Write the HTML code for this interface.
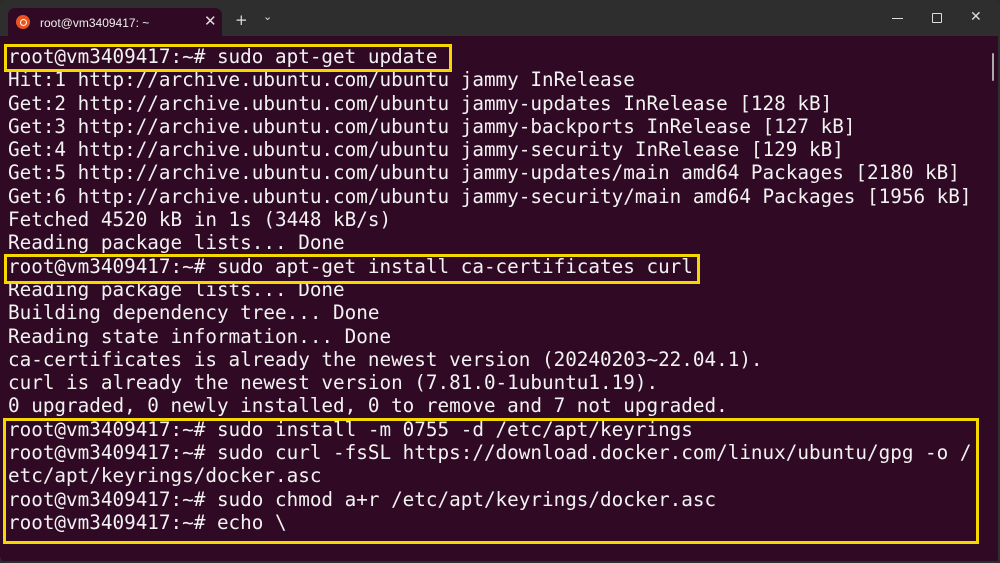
<!DOCTYPE html>
<html><head><meta charset="utf-8"><style>
*{margin:0;padding:0;box-sizing:border-box}
html,body{width:1000px;height:563px;overflow:hidden;background:#2b2b2b}
.win{position:absolute;left:0;top:0;width:1000px;height:563px;background:#2e2e2e;border-radius:8px;overflow:hidden}
.term{position:absolute;left:0;top:36px;width:998px;height:525px;background:#300a24}
.tab{position:absolute;left:8px;top:8px;width:214px;height:30px;background:#300a24;border-radius:7px 7px 0 0}
.tab .t{position:absolute;left:32px;top:8px;font:12px "Liberation Sans",sans-serif;color:#eee}
.logo{position:absolute;left:8px;top:7px;width:14px;height:14px;border-radius:50%;background:#e95420}
.logo:after{content:"";position:absolute;left:3.5px;top:3.5px;width:5px;height:5px;border:1.2px solid #fff;border-radius:50%}
.x{position:absolute;left:196px;top:4px;color:#ddd;font:15px "DejaVu Sans",sans-serif}
.tb{position:absolute;color:#ddd;font:15px "DejaVu Sans",sans-serif}
pre{position:absolute;left:8px;top:45px;font:19.3px/23.3px "DejaVu Sans Mono",monospace;color:#f2f2f2;white-space:pre}
.box{position:absolute;border:3px solid #f7d700}
.sb{position:absolute;left:992px;top:53px;width:2px;height:28px;background:#aaa;border-radius:1px}
</style></head><body>
<div class="win">
<div class="tab"><div class="logo"></div><div class="t">root@vm3409417: ~</div><div class="x">✕</div></div>
<div class="tb" style="left:235px;top:11px">+</div>
<div class="tb" style="left:263px;top:10px;font-size:11px">⌄</div>
<div style="position:absolute;left:892px;top:18px;width:11px;height:1px;background:#ddd"></div>
<div style="position:absolute;left:932px;top:13px;width:10px;height:10px;border:1px solid #ddd;border-radius:1px"></div>
<div class="tb" style="left:970px;top:9px;font-size:14px">✕</div>
<div class="term"></div>
<pre>root@vm3409417:~# sudo apt-get update
Hit:1 http://archive.ubuntu.com/ubuntu jammy InRelease
Get:2 http://archive.ubuntu.com/ubuntu jammy-updates InRelease [128 kB]
Get:3 http://archive.ubuntu.com/ubuntu jammy-backports InRelease [127 kB]
Get:4 http://archive.ubuntu.com/ubuntu jammy-security InRelease [129 kB]
Get:5 http://archive.ubuntu.com/ubuntu jammy-updates/main amd64 Packages [2180 kB]
Get:6 http://archive.ubuntu.com/ubuntu jammy-security/main amd64 Packages [1956 kB]
Fetched 4520 kB in 1s (3448 kB/s)
Reading package lists... Done
root@vm3409417:~# sudo apt-get install ca-certificates curl
Reading package lists... Done
Building dependency tree... Done
Reading state information... Done
ca-certificates is already the newest version (20240203~22.04.1).
curl is already the newest version (7.81.0-1ubuntu1.19).
0 upgraded, 0 newly installed, 0 to remove and 7 not upgraded.
root@vm3409417:~# sudo install -m 0755 -d /etc/apt/keyrings
root@vm3409417:~# sudo curl -fsSL https://download.docker.com/linux/ubuntu/gpg -o /
etc/apt/keyrings/docker.asc
root@vm3409417:~# sudo chmod a+r /etc/apt/keyrings/docker.asc
root@vm3409417:~# echo \</pre>
<div class="box" style="left:4px;top:44px;width:448px;height:28px"></div>
<div class="box" style="left:4px;top:254px;width:696px;height:30px"></div>
<div class="box" style="left:3px;top:418px;width:976px;height:126px"></div>
<div class="sb"></div>
</div>
</body></html>
